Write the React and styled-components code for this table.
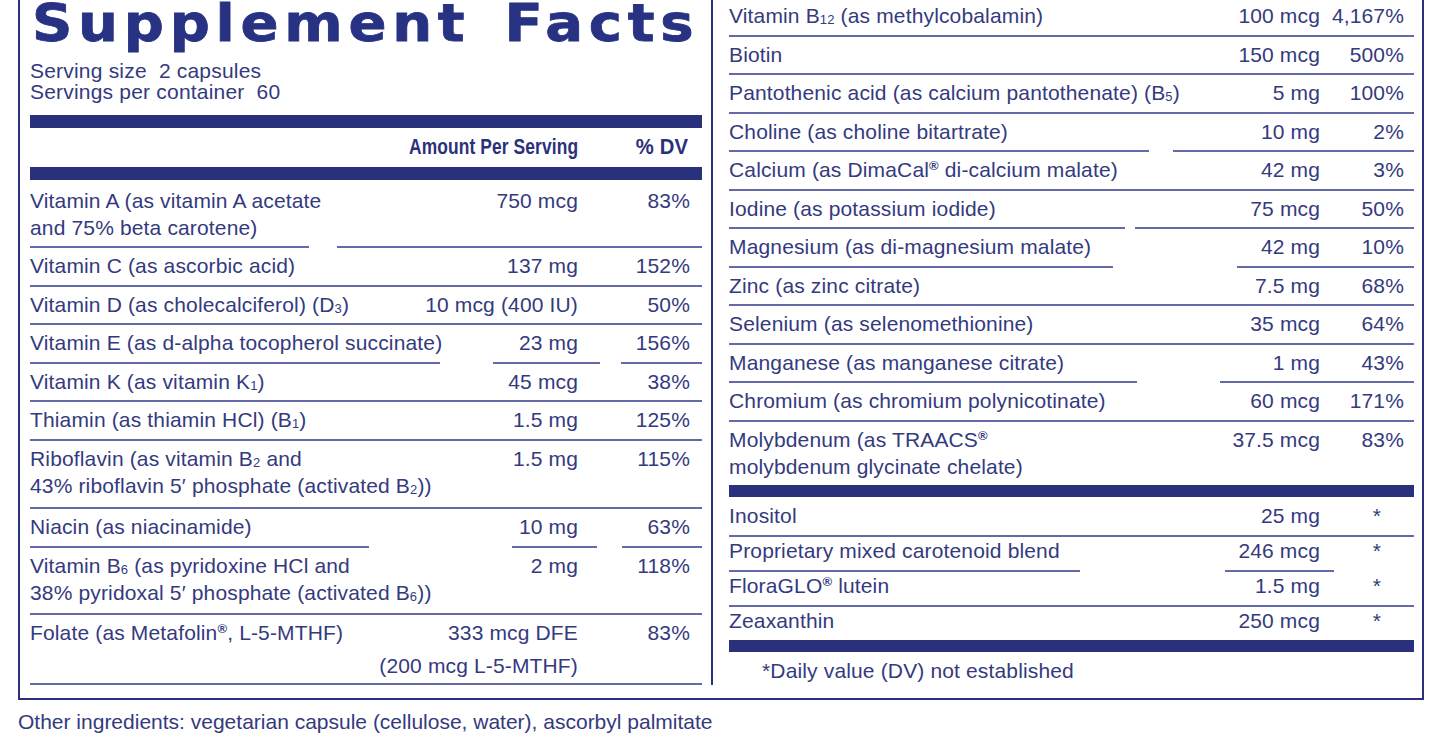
import React from 'react'
import styled, {createGlobalStyle} from 'styled-components'

const GlobalStyle = createGlobalStyle`
  html, body {
    margin: 0;
    padding: 0;
    background: #ffffff;
  }
  body {
    width: 1445px;
    height: 747px;
    overflow: hidden;
    font-family: "Liberation Sans", Arial, sans-serif;
    color: #343a7e;
  }
`

const NAVY = '#29307c'
const RULE = '#646aa8'

const LEFT = {width: 672, amountPad: 12, dvWidth: 112}
const RIGHT = {width: 685, amountPad: 10, dvWidth: 84}

// inline bits used inside the nutrient data
const Sub = styled.sub`
  font-size: 13px;
  line-height: 0;
  vertical-align: -1px;
`

const Sup = styled.sup`
  font-size: 13px;
  font-weight: 700;
  line-height: 0;
  vertical-align: 7px;
`

const SecondLine = styled.span`
  display: block;
  margin-top: 6px;
`

const leftRows = [
  {
    name: (
      <>
        Vitamin A (as vitamin A acetate
        <br />
        and 75% beta carotene)
      </>
    ),
    amount: '750 mcg',
    dv: '83%',
    pt: 6.5,
    rule: [[0, 279], [307, 672]]
  },
  {name: 'Vitamin C (as ascorbic acid)', amount: '137 mg', dv: '152%'},
  {
    name: (
      <>
        Vitamin D (as cholecalciferol) (D<Sub>3</Sub>)
      </>
    ),
    amount: '10 mcg (400 IU)',
    dv: '50%'
  },
  {
    name: 'Vitamin E (as d-alpha tocopherol succinate)',
    amount: '23 mg',
    dv: '156%',
    rule: [[0, 410], [463, 570], [591, 672]]
  },
  {
    name: (
      <>
        Vitamin K (as vitamin K<Sub>1</Sub>)
      </>
    ),
    amount: '45 mcg',
    dv: '38%'
  },
  {
    name: (
      <>
        Thiamin (as thiamin HCl) (B<Sub>1</Sub>)
      </>
    ),
    amount: '1.5 mg',
    dv: '125%'
  },
  {
    name: (
      <>
        Riboflavin (as vitamin B<Sub>2</Sub> and
        <br />
        43% riboflavin 5′ phosphate (activated B<Sub>2</Sub>))
      </>
    ),
    amount: '1.5 mg',
    dv: '115%',
    pb: 8.5
  },
  {
    name: 'Niacin (as niacinamide)',
    amount: '10 mg',
    dv: '63%',
    rule: [[0, 339], [482, 567], [592, 672]]
  },
  {
    name: (
      <>
        Vitamin B<Sub>6</Sub> (as pyridoxine HCl and
        <br />
        38% pyridoxal 5′ phosphate (activated B<Sub>6</Sub>))
      </>
    ),
    amount: '2 mg',
    dv: '118%',
    pb: 7.5
  },
  {
    name: (
      <>
        Folate (as Metafolin<Sup>®</Sup>, L-5-MTHF)
      </>
    ),
    amount: (
      <>
        333 mcg DFE
        <SecondLine>(200 mcg L-5-MTHF)</SecondLine>
      </>
    ),
    dv: '83%',
    pb: 4
  }
]

const rightRows = [
  {
    name: (
      <>
        Vitamin B<Sub>12</Sub> (as methylcobalamin)
      </>
    ),
    amount: '100 mcg',
    dv: '4,167%',
    pt: 2
  },
  {name: 'Biotin', amount: '150 mcg', dv: '500%'},
  {
    name: (
      <>
        Pantothenic acid (as calcium pantothenate) (B<Sub>5</Sub>)
      </>
    ),
    amount: '5 mg',
    dv: '100%'
  },
  {
    name: 'Choline (as choline bitartrate)',
    amount: '10 mg',
    dv: '2%',
    rule: [[0, 420], [444, 685]]
  },
  {
    name: (
      <>
        Calcium (as DimaCal<Sup>®</Sup> di-calcium malate)
      </>
    ),
    amount: '42 mg',
    dv: '3%'
  },
  {
    name: 'Iodine (as potassium iodide)',
    amount: '75 mcg',
    dv: '50%',
    rule: [[0, 396], [406, 685]]
  },
  {
    name: 'Magnesium (as di-magnesium malate)',
    amount: '42 mg',
    dv: '10%',
    rule: [[0, 384], [508, 685]]
  },
  {name: 'Zinc (as zinc citrate)', amount: '7.5 mg', dv: '68%'},
  {name: 'Selenium (as selenomethionine)', amount: '35 mcg', dv: '64%'},
  {
    name: 'Manganese (as manganese citrate)',
    amount: '1 mg',
    dv: '43%',
    rule: [[0, 408], [491, 685]]
  },
  {
    name: 'Chromium (as chromium polynicotinate)',
    amount: '60 mcg',
    dv: '171%'
  },
  {
    name: (
      <>
        Molybdenum (as TRAACS<Sup>®</Sup>
        <br />
        molybdenum glycinate chelate)
      </>
    ),
    amount: '37.5 mcg',
    dv: '83%',
    noRule: true
  }
]

const otherRows = [
  {name: 'Inositol', amount: '25 mg', dv: '*', pt: 5},
  {
    name: 'Proprietary mixed carotenoid blend',
    amount: '246 mcg',
    dv: '*',
    pt: 0.5,
    rule: [[0, 351], [496, 605]]
  },
  {
    name: (
      <>
        FloraGLO<Sup>®</Sup> lutein
      </>
    ),
    amount: '1.5 mg',
    dv: '*',
    pt: 0.5
  },
  {name: 'Zeaxanthin', amount: '250 mcg', dv: '*', pt: 0.5, noRule: true}
]

function Rule({segments}) {
  if (!segments) return <FullRule />
  let cursor = 0
  return (
    <SegmentedRule>
      {segments.map(([from, to]) => {
        const gap = from - cursor
        cursor = to
        return (
          <RuleSegment key={from} style={{marginLeft: gap, width: to - from}} />
        )
      })}
    </SegmentedRule>
  )
}

function NutrientRows({rows, side}) {
  return rows.map((row, i) => (
    <React.Fragment key={i}>
      <Row
        $pt={row.pt ?? 4}
        $pb={row.pb ?? 5.5}
        $pad={side.amountPad}
        $dv={side.dvWidth}
      >
        <Name>{row.name}</Name>
        <Amount>{row.amount}</Amount>
        <Dv $star={row.dv === '*'}>{row.dv}</Dv>
      </Row>
      {!row.noRule && <Rule segments={row.rule} />}
    </React.Fragment>
  ))
}

export default function App() {
  return (
    <>
      <GlobalStyle />
      <Label>
        <Panel>
          <Column>
            <Title>Supplement Facts</Title>
            <Serving>
              Serving size{'\u00a0\u00a0'}2 capsules
              <br />
              Servings per container{'\u00a0\u00a0'}60
            </Serving>
            <ThickBar $h={13} $mt={13} />
            <HeadRow $pt={5} $pb={7} $pad={LEFT.amountPad} $dv={LEFT.dvWidth}>
              <span />
              <HeadCell $scale={0.79}>Amount Per Serving</HeadCell>
              <HeadCell $scale={0.92} $shift={2}>
                % DV
              </HeadCell>
            </HeadRow>
            <ThickBar $h={13} />
            <NutrientRows rows={leftRows} side={LEFT} />
          </Column>
          <Divider />
          <Column>
            <NutrientRows rows={rightRows} side={RIGHT} />
            <ThickBar $h={12} />
            <NutrientRows rows={otherRows} side={RIGHT} />
            <ThickBar $h={12} />
            <Footnote>*Daily value (DV) not established</Footnote>
          </Column>
        </Panel>
      </Label>
      <Ingredients>
        Other ingredients: vegetarian capsule (cellulose, water), ascorbyl
        palmitate
      </Ingredients>
    </>
  )
}

const Label = styled.div`
  margin-left: 18px;
  width: 1406px;
  box-sizing: border-box;
  border: 2px solid ${NAVY};
  border-top: none;
  padding: 0 8px 13px 10px;
`

const Panel = styled.div`
  display: grid;
  grid-template-columns: ${LEFT.width}px auto ${RIGHT.width}px;
`

const Column = styled.div`
  display: flex;
  flex-direction: column;
  min-width: 0;
`

const Divider = styled.div`
  background: ${NAVY};
  background-clip: content-box;
  margin: 0 16px 0 9px;
  width: 2px;
`

const Title = styled.h1`
  margin: 0 0 0 2px;
  font-family: "DejaVu Sans", "Liberation Sans", sans-serif;
  font-weight: 700;
  font-size: 51px;
  line-height: 48px;
  letter-spacing: 5.2px;
  word-spacing: 8px;
  color: #283283;
  -webkit-text-stroke: 0.8px #283283;
  white-space: nowrap;
  transform: scaleX(1.1);
  transform-origin: left center;
`

const Serving = styled.div`
  margin-top: 12px;
  font-size: 21px;
  line-height: 21px;
  letter-spacing: 0.2px;
`

const ThickBar = styled.div`
  height: ${p => p.$h}px;
  margin-top: ${p => p.$mt || 0}px;
  background: ${NAVY};
  flex: none;
`

const Row = styled.div`
  display: grid;
  grid-template-columns: 1fr auto ${p => p.$dv}px;
  padding: ${p => p.$pt}px ${p => p.$pad}px ${p => p.$pb}px 0;
  font-size: 21px;
  line-height: 27px;
  letter-spacing: 0.15px;
  white-space: nowrap;
`

const HeadRow = styled(Row)`
  font-weight: 700;
  font-size: 22px;
  color: #2b3179;
`

const HeadCell = styled.div`
  text-align: right;
  padding-right: ${p => p.$shift || 0}px;
  transform: scaleX(${p => p.$scale});
  transform-origin: right center;
`

const Name = styled.div``

const Amount = styled.div`
  text-align: right;
`

const Dv = styled.div`
  text-align: right;
  padding-right: ${p => (p.$star ? 23 : 0)}px;
`

const FullRule = styled.div`
  height: 2px;
  background: ${RULE};
  flex: none;
`

const SegmentedRule = styled.div`
  display: flex;
  height: 2px;
  flex: none;
`

const RuleSegment = styled.span`
  display: block;
  height: 2px;
  background: ${RULE};
  flex: none;
`

const Footnote = styled.div`
  padding: 5.5px 0 0 33px;
  font-size: 21px;
  line-height: 27px;
  letter-spacing: 0.15px;
`

const Ingredients = styled.div`
  margin: 8px 0 0 18px;
  font-size: 21px;
  line-height: 27px;
  white-space: nowrap;
`
